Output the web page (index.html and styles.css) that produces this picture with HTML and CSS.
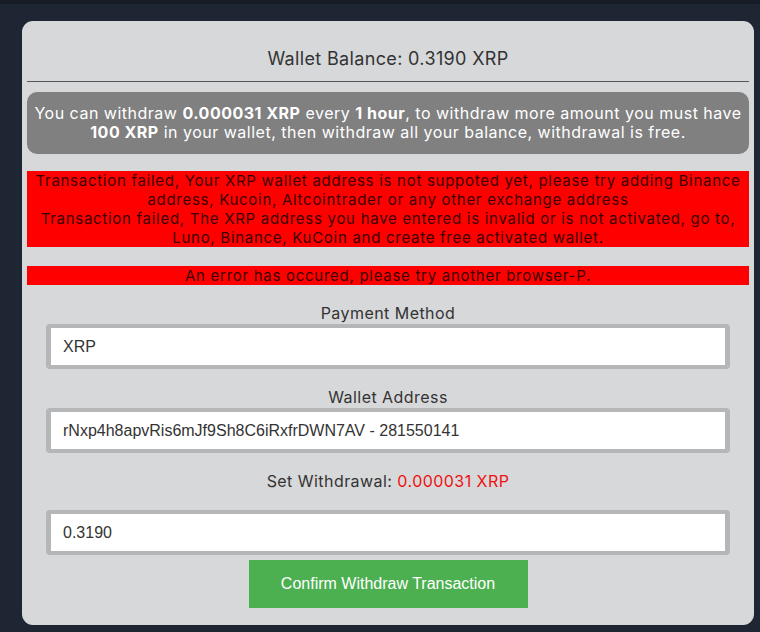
FILE: index.html
```html
<!DOCTYPE html>
<html>
<head>
<meta charset="utf-8">
<link rel="stylesheet" href="styles.css">
</head>
<body>
<div class="topbar"></div>
<div class="page">
  <div class="card">
    <h2 class="balance">Wallet Balance: 0.3190 XRP</h2>
    <div class="divider"></div>
    <div class="notice">You can withdraw <b>0.000031 XRP</b> every <b>1 hour</b>, to withdraw more amount you must have <b>100 XRP</b> in your wallet, then withdraw all your balance, withdrawal is free.</div>
    <div class="alert alert-first">Transaction failed, Your XRP wallet address is not suppoted yet, please try adding Binance address, Kucoin, Altcointrader or any other exchange address<br>Transaction failed, The XRP address you have entered is invalid or is not activated, go to, Luno, Binance, KuCoin and create free activated wallet.</div>
    <div class="alert alert-second">An error has occured, please try another browser-P.</div>
    <form class="form">
      <label class="label">Payment Method</label>
      <div class="field">XRP</div>
      <label class="label">Wallet Address</label>
      <div class="field">rNxp4h8apvRis6mJf9Sh8C6iRxfrDWN7AV - 281550141</div>
      <label class="label">Set Withdrawal: <span class="amount">0.000031 XRP</span></label>
      <div class="field field-gap">0.3190</div>
      <div class="actions"><button type="button" class="btn">Confirm Withdraw Transaction</button></div>
    </form>
  </div>
</div>
</body>
</html>
```
FILE: styles.css
```css
html, body {
  margin: 0;
  padding: 0;
  background: #1e2533;
  height: 100%;
  overflow: hidden;
}
body {
  font-family: Inter, "Noto Sans", sans-serif;
  color: #333;
}
.topbar {
  height: 4px;
  background: #171c26;
}
.page {
  padding: 17px 6px 0 22px;
}
.card {
  width: 732px;
  box-sizing: border-box;
  background: #d7d8da;
  border-radius: 11px;
  padding: 25px 5px 17px;
}
.balance {
  margin: 0;
  font-size: 18px;
  font-weight: 400;
  line-height: 26px;
  letter-spacing: 0.35px;
  text-align: center;
  color: #333;
}
.divider {
  margin-top: 9px;
  height: 1px;
  background: #555;
}
.notice {
  margin-top: 10px;
  background: #808080;
  color: #fff;
  border-radius: 10px;
  padding: 12px 6px;
  font-size: 16px;
  line-height: 19px;
  letter-spacing: 0.5px;
  text-align: center;
}
.notice b {
  font-weight: 700;
}
.alert {
  background: #ff0000;
  color: #3a0000;
  font-size: 15px;
  line-height: 19px;
  letter-spacing: 0.72px;
  text-align: center;
  padding: 0 1px;
}
.alert-first {
  margin-top: 17px;
}
.alert-second {
  margin-top: 19px;
}
.form {
  margin: 0;
  padding: 0 19px;
  display: flex;
  flex-direction: column;
}
.label {
  display: block;
  margin-top: 19px;
  font-size: 16px;
  line-height: 19px;
  letter-spacing: 0.45px;
  text-align: center;
  color: #333;
}
.amount {
  color: #f01010;
}
.field {
  margin-top: 1px;
  height: 45px;
  box-sizing: border-box;
  border: 4px solid #b5b6b7;
  border-left-width: 5px;
  border-right-width: 5px;
  border-radius: 4px;
  background: #fff;
  padding: 0 12px;
  font-family: "Liberation Sans", Arial, sans-serif;
  font-size: 16px;
  line-height: 37px;
  color: #333;
}
.field-gap {
  margin-top: 19px;
}
.actions {
  display: flex;
  justify-content: center;
  margin-top: 5px;
}
.btn {
  width: 279px;
  height: 48px;
  border: 0;
  background: #4caf50;
  color: #fff;
  font-family: "Liberation Sans", Arial, sans-serif;
  font-size: 16px;
  padding: 0;
}
```
